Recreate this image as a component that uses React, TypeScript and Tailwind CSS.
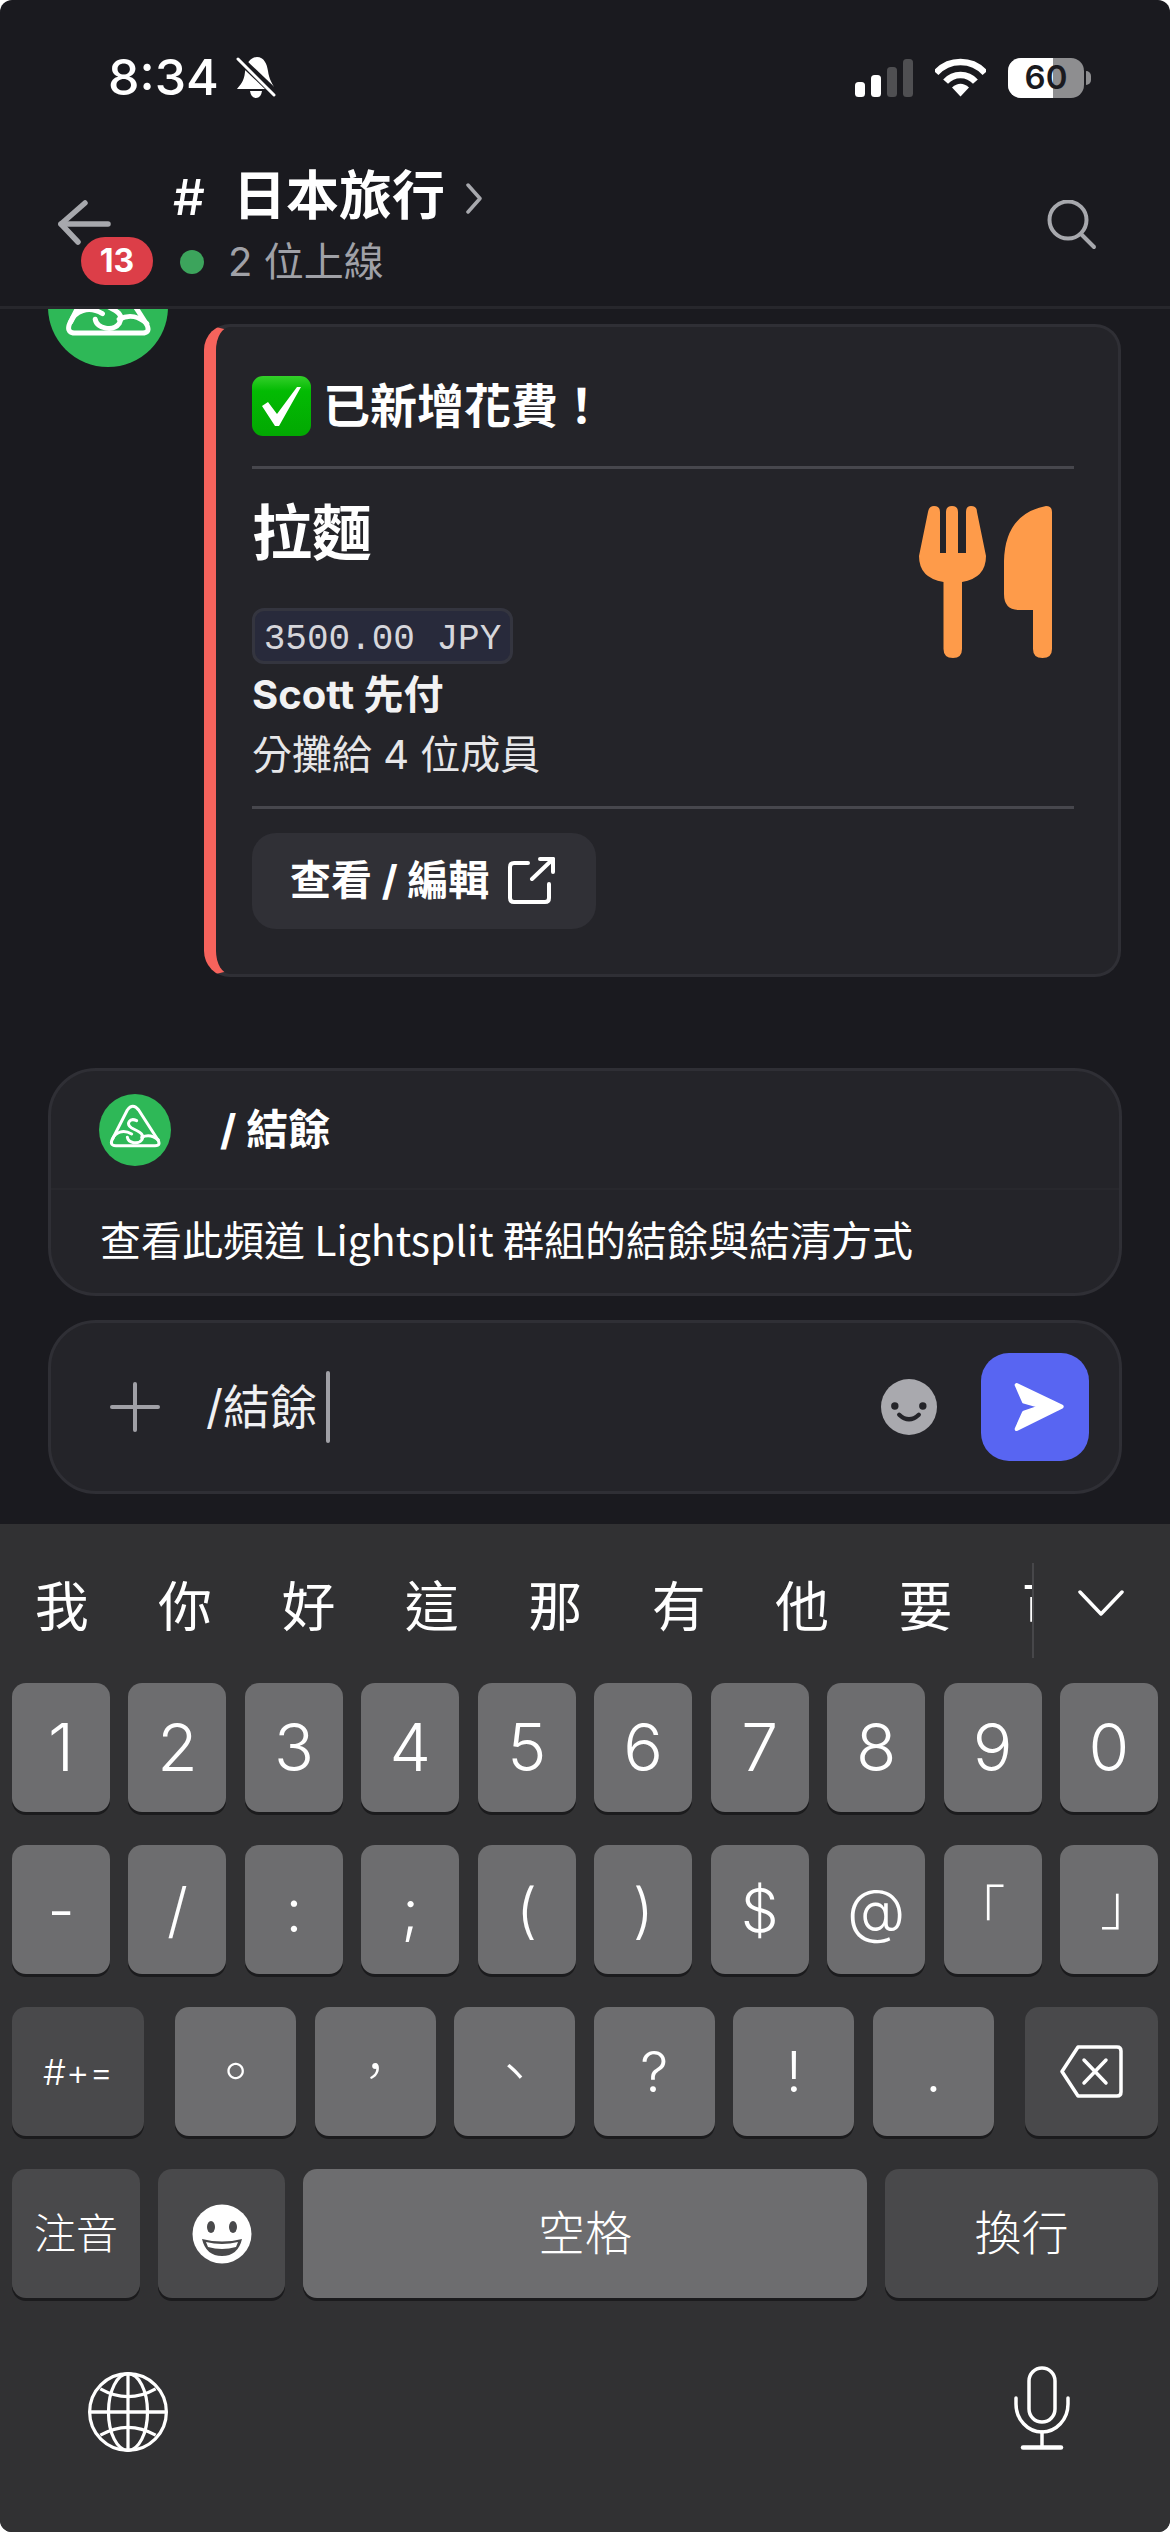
import type { ReactNode } from "react";

const Logo = ({ className }: { className: string }) => (
  <svg viewBox="27 30 216 216" className={className}>
    <circle cx="135" cy="138" r="108" fill="#2eb857" />
    <g fill="none" stroke="#fff" strokeWidth="9" strokeLinecap="round" strokeLinejoin="round">
      <path d="M112 78 Q128 55 146 78 L202 165 Q215 185 195 185 L78 185 Q55 185 70 160 Z" />
      <path d="M140 110 C120 100 105 120 125 132 C150 145 165 150 155 168 C145 182 115 178 112 160" />
      <path d="M155 160 C175 150 190 155 205 168" />
      <path d="M68 165 C75 145 100 135 125 150" />
    </g>
  </svg>
);

const StatusIcons = () => (
  <div className="flex items-center">
    {/* Signal */}
    <svg viewBox="0 0 58 38" className="w-[58px] h-[38px] mt-[1px]">
      <rect x="0" y="23" width="10" height="15" rx="3.5" fill="#fff" />
      <rect x="16" y="16" width="10" height="22" rx="3.5" fill="#fff" />
      <rect x="32" y="8" width="10" height="30" rx="3.5" fill="#4f4f52" />
      <rect x="48" y="0" width="10" height="38" rx="3.5" fill="#4f4f52" />
    </svg>
    {/* Wifi */}
    <svg viewBox="0 0 51 39" className="w-[51px] h-[39px] ml-[22px]" fill="none" stroke="#fff" strokeWidth="6.5">
      <path d="M1 14.9 A33 33 0 0 1 50 14.9" />
      <path d="M10.6 23.6 A20 20 0 0 1 40.4 23.6" />
      <path d="M25.5 38.5 L17 29.5 Q25.5 22 34 29.5 Z" fill="#fff" stroke="none" />
    </svg>
    {/* Battery */}
    <div className="relative ml-[22px] w-[76px] h-[40px] rounded-[13px] overflow-hidden bg-[#8e8e90] flex">
      <div className="w-[45px] bg-white"></div>
      <span className="absolute inset-0 flex items-center justify-center text-[33px] font-semibold text-[#1a1a1f]">
        60
      </span>
    </div>
    <div className="ml-[2px] w-[5px] h-[14px] rounded-r-full bg-[#8e8e90]"></div>
  </div>
);

const BellSlash = () => (
  <svg viewBox="0 0 40 41" className="w-[40px] h-[41px] ml-[17px]">
    <path d="M21 0 C28 0 31 7 32 14 C33 22 36 26 38 30 L38 32 H1 C4 28 8 25 9 15 C10 6 15 0 21 0 Z" fill="#fff" />
    <path d="M14 34 H26 Q25 41 20 41 Q15 41 14 34 Z" fill="#fff" />
    <path d="M0 -1 L40 37" stroke="#1a1a1f" strokeWidth="8" />
    <path d="M2 2 L38 38" stroke="#fff" strokeWidth="3" strokeLinecap="round" />
  </svg>
);

const Header = () => (
  <div className="h-[309px] border-b-[3px] border-[#27272c] shrink-0">
    <div className="pt-[57px] pl-[108px] pr-[79px] h-[98px] flex items-center justify-between">
      <div className="flex items-center">
        <span className="text-[50px] leading-[41px] font-medium text-white">8:34</span>
        <BellSlash />
      </div>
      <StatusIcons />
    </div>
    <div className="flex pl-[58px] pr-[73px]">
      <div className="relative w-[115px] shrink-0">
        <svg
          viewBox="0 0 53 46"
          className="absolute left-0 top-[101px] w-[53px] h-[46px]"
          fill="none"
          stroke="#a7a8ad"
          strokeWidth="5.5"
          strokeLinecap="round"
          strokeLinejoin="round"
        >
          <path d="M3 25 H50" />
          <path d="M27 4 L3 25 L20 43" />
        </svg>
        <div className="absolute left-[23px] top-[139px] w-[72px] h-[48px] rounded-full bg-[#dc3e48] flex items-center justify-center text-[32px] font-bold text-white">
          13
        </div>
      </div>
      <div className="pt-[69px]">
        <div className="flex items-center h-[60px] text-[53px] font-bold text-white">
          <span className="text-[50px] font-medium w-[60px]">#</span>
          <span>日本旅行</span>
          <svg
            viewBox="0 0 18 31"
            className="w-[18px] h-[31px] ml-[20px] mt-[2px]"
            fill="none"
            stroke="#a7a8ad"
            strokeWidth="3.5"
            strokeLinecap="round"
            strokeLinejoin="round"
          >
            <path d="M3 2 L15 15.5 L3 29" />
          </svg>
        </div>
        <div className="flex items-center h-[60px] mt-[5px]">
          <div className="ml-[7px] w-[24px] h-[24px] rounded-full bg-[#3ca45c]"></div>
          <span className="ml-[24px] text-[40px] text-[#a0a1a7]">2 位上線</span>
        </div>
      </div>
      <svg
        viewBox="0 0 50 50"
        className="ml-auto mt-[102px] w-[50px] h-[50px]"
        fill="none"
        stroke="#a7a8ad"
        strokeWidth="4"
        strokeLinecap="round"
      >
        <circle cx="21" cy="20" r="18.5" />
        <path d="M34 34 L47 47" />
      </svg>
    </div>
  </div>
);

const CheckEmoji = () => (
  <svg viewBox="0 0 59 60" className="w-[59px] h-[60px] shrink-0">
    <defs>
      <linearGradient id="chk" x1="0" y1="0" x2="0" y2="1">
        <stop offset="0" stopColor="#34cf2a" />
        <stop offset="0.25" stopColor="#03bb03" />
        <stop offset="1" stopColor="#02a802" />
      </linearGradient>
    </defs>
    <rect width="59" height="60" rx="11" fill="url(#chk)" />
    <path d="M10 30 L16 26 L25 38 L45 11 L49 11 L27 50 L23 50 Z" fill="#fff" />
  </svg>
);

const ForkKnife = () => (
  <svg viewBox="0 0 133 152" className="w-[133px] h-[152px] mt-[37px] mr-[22px]" fill="#fe9b4a">
    <path d="M9 6 Q10 0 15 0 Q21 0 21 6 L21 47 L27 47 L27 6 Q27 0 33 0 Q39 0 39 6 L39 47 L47 47 L47 6 Q47 0 52 0 Q58 0 58 6 L67 50 Q67 72 43 76 L43 143 Q43 152 34 152 Q24.5 152 24.5 143 L24.5 76 Q0 72 0 50 Z" />
    <path d="M133 6 Q133 0 127 0 Q86 8 85 55 L85 88 Q85 104 100 104 L114 104 L114 143 Q114 152 123.5 152 Q133 152 133 143 Z" />
  </svg>
);

const ExpenseCard = () => (
  <div className="w-[917px] h-[653px] rounded-[26px] border-[3px] border-[#2f2f35] border-l-[12px] border-l-[#f6635c] bg-[#242429] pl-[36px] pr-[44px] pt-[49px]">
    <div className="flex items-center h-[60px] text-[47px] font-bold text-white">
      <CheckEmoji />
      <span className="ml-[12px]">已新增花費！</span>
    </div>
    <div className="h-[3px] mt-[30px] bg-[#47474d]"></div>
    <div className="flex justify-between">
      <div className="pt-[31px]">
        <div className="text-[60px] leading-[66px] font-bold text-white">拉麵</div>
        <div className="mt-[42px] w-[261px] h-[56px] pt-[8px] rounded-[12px] border-[3px] border-[#34353f] bg-[#282a3b] flex items-center justify-center font-['Liberation_Mono',monospace] text-[36px] text-[#d6d6db]">
          3500.00 JPY
        </div>
        <div className="h-[56px] pt-[5px] flex items-center text-[40px] font-bold text-[#f2f2f3]">Scott 先付</div>
        <div className="h-[60px] mt-[5px] flex items-center text-[40px] text-[#e6e6e8]">分攤給 4 位成員</div>
      </div>
      <ForkKnife />
    </div>
    <div className="h-[3px] mt-[21px] bg-[#47474d]"></div>
    <div className="mt-[24px] w-[344px] h-[96px] rounded-[24px] bg-[#303036] flex items-center pl-[38px] text-[41px] font-bold text-white">
      <span>查看 / 編輯</span>
      <svg
        viewBox="0 0 47 47"
        className="ml-[19px] w-[47px] h-[47px] -mt-[2px]"
        fill="none"
        stroke="#fff"
        strokeWidth="4"
        strokeLinecap="round"
        strokeLinejoin="round"
      >
        <path d="M20 6 H6 Q2 6 2 10 V41 Q2 45 6 45 H37 Q41 45 41 41 V27" />
        <path d="M24 22 L45 2" />
        <path d="M32 2 H45 V15" />
      </svg>
    </div>
  </div>
);

const CommandCard = () => (
  <div className="mt-[91px] ml-[48px] w-[1074px] h-[228px] rounded-[48px] border-[3px] border-[#2f2f35] bg-[#242429] flex flex-col">
    <div className="h-[119px] border-b-[2px] border-[#28282d] flex items-center pl-[48px]">
      <Logo className="w-[72px] h-[72px]" />
      <span className="ml-[49px] text-[42px] font-bold text-white">/ 結餘</span>
    </div>
    <div className="flex-1 flex items-center pl-[49px] pb-[6px] text-[41px] text-white font-['Noto_Sans_CJK_TC',sans-serif]">
      查看此頻道 Lightsplit 群組的結餘與結清方式
    </div>
  </div>
);

const InputBar = () => (
  <div className="mt-[24px] ml-[48px] w-[1074px] h-[174px] rounded-[48px] border-[3px] border-[#2f2f35] bg-[#242429] flex items-center pl-[59px] pr-[30px]">
    <svg viewBox="0 0 50 50" className="w-[50px] h-[50px]" stroke="#a0a0a6" strokeWidth="4" strokeLinecap="round">
      <path d="M25 2 V48" />
      <path d="M2 25 H48" />
    </svg>
    <span className="ml-[46px] text-[47px] text-[#f0f0f2]">/結餘</span>
    <div className="ml-[9px] w-[4px] h-[72px] rounded-full bg-[#a0a0a6]"></div>
    <svg viewBox="34 102 166 166" className="ml-auto w-[56px] h-[56px]">
      <circle cx="117" cy="185" r="83" fill="#a9a9ae" />
      <circle cx="75" cy="182" r="11" fill="#242429" />
      <circle cx="158" cy="182" r="11" fill="#242429" />
      <path d="M88 208 Q117 235 146 208" fill="none" stroke="#242429" strokeWidth="13" strokeLinecap="round" />
    </svg>
    <div className="ml-[44px] w-[108px] h-[108px] rounded-[28px] bg-[#5865f2] flex items-center justify-center">
      <svg viewBox="333 24 324 324" className="w-[108px] h-[108px]">
        <path
          d="M440 120 L575 185 L440 252 L462 203 L515 185 L462 170 Z"
          fill="#fff"
          stroke="#fff"
          strokeWidth="12"
          strokeLinejoin="round"
        />
      </svg>
    </div>
  </div>
);

const Key = ({
  children,
  className = "",
  dark = false,
}: {
  children?: ReactNode;
  className?: string;
  dark?: boolean;
}) => (
  <div
    className={`flex items-center justify-center rounded-[14px] shadow-[0_3px_0_#1b1b1d] text-white ${
      dark ? "bg-[#49494b]" : "bg-[#6d6d6f]"
    } ${className}`}
  >
    {children}
  </div>
);

const candidates = ["我", "你", "好", "這", "那", "有", "他", "要", "可"];
const digits = ["1", "2", "3", "4", "5", "6", "7", "8", "9", "0"];
const symbols = [
  { label: "-", className: "text-[60px]" },
  { label: "/", className: "text-[60px]" },
  { label: ":", className: "text-[60px]" },
  { label: ";", className: "text-[60px]" },
  { label: "(", className: "text-[60px]" },
  { label: ")", className: "text-[60px]" },
  { label: "$", className: "text-[60px]" },
  { label: "@", className: "text-[60px]" },
  { label: "「", className: "text-[54px] -translate-x-[14px] translate-y-[2px]" },
  { label: "」", className: "text-[54px] translate-x-[18px] -translate-y-[4px]" },
];
const punctuation = [
  { label: "。", className: "text-[56px]" },
  { label: "，", className: "text-[50px]" },
  { label: "、", className: "text-[56px]" },
  { label: "?", className: "text-[56px]" },
  { label: "!", className: "text-[56px]" },
  { label: ".", className: "text-[56px]" },
];

const Keyboard = () => (
  <div className="mt-[30px] flex-1 bg-[#313133]">
    {/* Candidates */}
    <div className="h-[159px] flex">
      <div className="w-[1034px] h-[95px] mt-[39px] border-r-[2px] border-[#47474a] overflow-hidden flex">
        {candidates.map((c) => (
          <div
            key={c}
            className="w-[123.4px] shrink-0 flex items-center justify-center pb-[6px] text-[54px] text-white"
          >
            {c}
          </div>
        ))}
      </div>
      <svg
        viewBox="0 0 46 26"
        className="ml-[44px] mt-[66px] w-[46px] h-[26px]"
        fill="none"
        stroke="#fff"
        strokeWidth="3.5"
        strokeLinecap="round"
        strokeLinejoin="round"
      >
        <path d="M2 2 L23 24 L44 2" />
      </svg>
    </div>

    {/* Keys */}
    <div className="px-[12px] flex flex-col gap-[33px] font-light">
      <div className="flex justify-between h-[129px]">
        {digits.map((d) => (
          <Key key={d} className="w-[98px] text-[66px]">
            {d}
          </Key>
        ))}
      </div>
      <div className="flex justify-between h-[129px]">
        {symbols.map((s) => (
          <Key key={s.label} className="w-[98px]">
            <span className={s.className}>{s.label}</span>
          </Key>
        ))}
      </div>
      <div className="flex h-[129px]">
        <Key dark className="w-[132px] text-[36px]">
          #+=
        </Key>
        <div className="ml-[31px] flex-1 flex justify-between">
          {punctuation.map((p) => (
            <Key key={p.label} className="w-[121px]">
              <span className={p.className}>{p.label}</span>
            </Key>
          ))}
        </div>
        <Key dark className="ml-[31px] w-[133px]">
          <svg
            viewBox="0 0 63 53"
            className="w-[63px] h-[53px]"
            fill="none"
            stroke="#fff"
            strokeWidth="3.5"
            strokeLinecap="round"
            strokeLinejoin="round"
          >
            <path d="M18 2 H57 Q61 2 61 6 V47 Q61 51 57 51 H18 L2 26.5 Z" />
            <path d="M24 15 L46 38" />
            <path d="M46 15 L24 38" />
          </svg>
        </Key>
      </div>
      <div className="flex gap-[18px] h-[129px]">
        <Key dark className="w-[128px] text-[42px]">
          注音
        </Key>
        <Key dark className="w-[127px]">
          <svg viewBox="0 0 60 60" className="w-[60px] h-[60px]">
            <circle cx="30" cy="30" r="29.5" fill="#fff" />
            <ellipse cx="19" cy="23" rx="4" ry="6" fill="#49494b" />
            <ellipse cx="41" cy="23" rx="4" ry="6" fill="#49494b" />
            <path d="M10 35 Q30 40 50 35 Q46 52 30 52 Q14 52 10 35 Z" fill="#49494b" />
            <path d="M14 38 Q30 42 46 38 L44 43 Q30 47 16 43 Z" fill="#fff" />
          </svg>
        </Key>
        <Key className="flex-1 text-[47px]">空格</Key>
        <Key dark className="w-[273px] text-[47px]">
          換行
        </Key>
      </div>
    </div>

    {/* Globe and mic */}
    <div className="mt-[68px] pl-[88px] pr-[100px] flex justify-between">
      <svg
        viewBox="80 60 246 246"
        className="mt-[6px] w-[80px] h-[80px]"
        fill="none"
        stroke="#fff"
        strokeWidth="10"
      >
        <circle cx="203" cy="183" r="118" />
        <ellipse cx="203" cy="183" rx="60" ry="118" />
        <path d="M203 65 V301" />
        <path d="M85 183 H321" />
        <path d="M118 112 Q203 160 288 112" />
        <path d="M118 254 Q203 206 288 254" />
      </svg>
      <svg
        viewBox="0 0 56 84"
        className="w-[56px] h-[84px]"
        fill="none"
        stroke="#fff"
        strokeWidth="3.5"
        strokeLinecap="round"
      >
        <rect x="15" y="2" width="26" height="54" rx="13" />
        <path d="M2 32 V38 A26 28 0 0 0 54 38 V32" />
        <path d="M28 66 V80" />
        <path d="M9 81.5 H47" strokeWidth="4.5" />
      </svg>
    </div>
  </div>
);

const App = () => {
  return (
    <div className="w-[1170px] h-[2532px] bg-white">
      <div className="w-full h-full rounded-[12px] overflow-hidden bg-[#1a1a1f] flex flex-col font-['Inter','Noto_Sans_CJK_TC',sans-serif]">
        <Header />

        {/* Messages */}
        <div className="overflow-hidden h-[668px] shrink-0">
          <div className="flex items-start pl-[48px] pt-[15px]">
            <Logo className="w-[120px] h-[120px] -mt-[77px] shrink-0" />
            <div className="ml-[36px]">
              <ExpenseCard />
            </div>
          </div>
        </div>

        <CommandCard />
        <InputBar />
        <Keyboard />
      </div>
    </div>
  );
};

export default App;
